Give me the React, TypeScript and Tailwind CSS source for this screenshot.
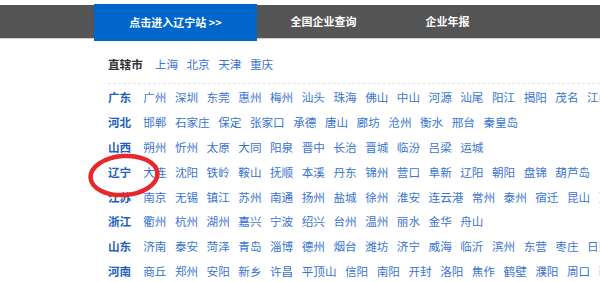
const REGIONS: { name: string; cities: string[] }[] = [
  {
    name: '广东',
    cities: ['广州', '深圳', '东莞', '惠州', '梅州', '汕头', '珠海', '佛山', '中山', '河源', '汕尾', '阳江', '揭阳', '茂名', '江门'],
  },
  {
    name: '河北',
    cities: ['邯郸', '石家庄', '保定', '张家口', '承德', '唐山', '廊坊', '沧州', '衡水', '邢台', '秦皇岛'],
  },
  {
    name: '山西',
    cities: ['朔州', '忻州', '太原', '大同', '阳泉', '晋中', '长治', '晋城', '临汾', '吕梁', '运城'],
  },
  {
    name: '辽宁',
    cities: ['大连', '沈阳', '铁岭', '鞍山', '抚顺', '本溪', '丹东', '锦州', '营口', '阜新', '辽阳', '朝阳', '盘锦', '葫芦岛'],
  },
  {
    name: '江苏',
    cities: ['南京', '无锡', '镇江', '苏州', '南通', '扬州', '盐城', '徐州', '淮安', '连云港', '常州', '泰州', '宿迁', '昆山', '更多'],
  },
  {
    name: '浙江',
    cities: ['衢州', '杭州', '湖州', '嘉兴', '宁波', '绍兴', '台州', '温州', '丽水', '金华', '舟山'],
  },
  {
    name: '山东',
    cities: ['济南', '泰安', '菏泽', '青岛', '淄博', '德州', '烟台', '潍坊', '济宁', '威海', '临沂', '滨州', '东营', '枣庄', '日照'],
  },
  {
    name: '河南',
    cities: ['商丘', '郑州', '安阳', '新乡', '许昌', '平顶山', '信阳', '南阳', '开封', '洛阳', '焦作', '鹤壁', '濮阳', '周口', '驻马店'],
  },
];

const MUNICIPALITIES = ['上海', '北京', '天津', '重庆'];

const FONT = { fontFamily: '"Noto Sans CJK SC", "Noto Sans", sans-serif' };

function CityRow({ label, cities, height }: { label: string; cities: string[]; height: string }) {
  return (
    <div className={`flex items-center whitespace-nowrap text-[11.6px] leading-none ${height}`}>
      <span className={`mr-[12px] font-bold ${label === '直辖市' ? 'text-[#333333]' : 'text-[#1d5fbf]'}`}>
        {label}
      </span>
      {cities.map((c) => (
        <a key={c} className="mr-[8.5px] text-[#3a74cf] cursor-pointer hover:underline">
          {c}
        </a>
      ))}
    </div>
  );
}

export default function App() {
  return (
    <div className="relative w-[600px] h-[282px] overflow-hidden bg-white" style={FONT}>
      {/* top nav */}
      <div className="pt-[5px]">
        <div className="flex items-center h-[34px] bg-[#555555] border-b border-[#cfcfcf] text-white text-[11px] font-bold">
          <div className="flex items-center justify-center ml-[94px] w-[163px] h-[37px] bg-[#0066cc] mt-[1px]">
            点击进入辽宁站 &gt;&gt;
          </div>
          <div className="w-[133px] text-center">全国企业查询</div>
          <div className="w-[115px] text-center">企业年报</div>
        </div>
      </div>

      {/* city list */}
      <div className="pl-[108px]">
        <div className="mt-[13px]">
          <CityRow label="直辖市" cities={MUNICIPALITIES} height="h-[25px]" />
        </div>
        <div className="mt-[6px] border-b border-dashed border-[#e3e3e3]" />
        <div className="mt-[1.5px]">
          {REGIONS.map((r) => (
            <CityRow key={r.name} label={r.name} cities={r.cities} height="h-[24.86px]" />
          ))}
        </div>
      </div>

      {/* red hand-drawn circle */}
      <svg
        className="absolute left-[87px] top-[153px] pointer-events-none"
        width="74"
        height="45"
        viewBox="0 0 74 45"
      >
        <ellipse
          cx="37"
          cy="22.5"
          rx="33.5"
          ry="19.5"
          fill="none"
          stroke="#e8272b"
          strokeWidth="4.5"
          transform="rotate(-4 37 22.5)"
        />
      </svg>
    </div>
  );
}
